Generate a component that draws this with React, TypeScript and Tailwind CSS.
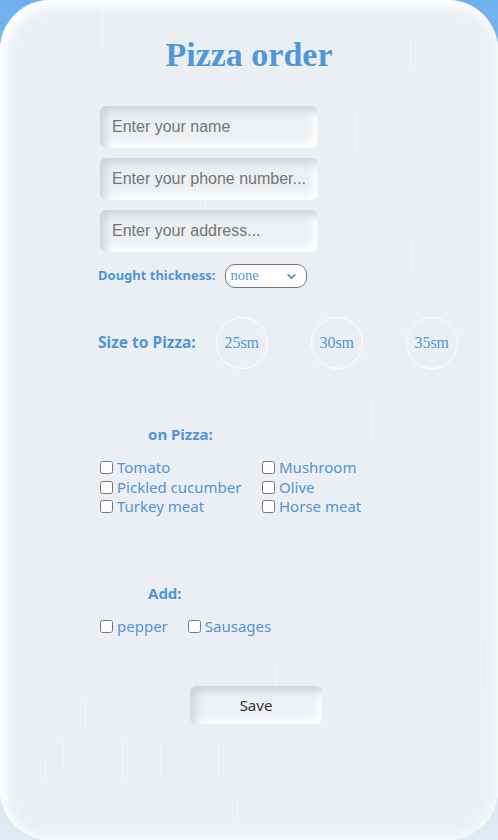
import { ChevronDown } from "lucide-react";

const rain = [
  { l: 102, t: 8, h: 40 },
  { l: 205, t: 200, h: 30 },
  { l: 355, t: 110, h: 40 },
  { l: 410, t: 40, h: 30 },
  { l: 372, t: 400, h: 40 },
  { l: 480, t: 640, h: 50 },
  { l: 45, t: 760, h: 20 },
  { l: 63, t: 740, h: 30 },
  { l: 122, t: 740, h: 40 },
  { l: 160, t: 745, h: 30 },
  { l: 218, t: 743, h: 35 },
  { l: 237, t: 800, h: 20 },
  { l: 85, t: 700, h: 30 },
  { l: 275, t: 665, h: 35 },
  { l: 412, t: 240, h: 30 },
];

const toppings = [
  "Tomato",
  "Mushroom",
  "Pickled cucumber",
  "Olive",
  "Turkey meat",
  "Horse meat",
];

const Check = ({ label }: { label: string }) => (
  <label className="flex items-center gap-[4px] text-[15px] leading-[19.5px] text-[#4f95d8]">
    <input type="checkbox" className="m-0 w-[13px] h-[13px]" />
    <span>{label}</span>
  </label>
);

const neu =
  "shadow-[inset_5px_5px_9px_#cfd3d8,inset_-5px_-5px_9px_#ffffff] bg-[#edf0f3]";

export default function App() {
  return (
    <div className="w-[498px] h-[840px] bg-gradient-to-b from-[#6eb0ee] to-[#e1e9f4] font-['Noto_Sans',sans-serif]">
      <div className="relative w-full h-full overflow-hidden rounded-[50px] bg-[#ebeff3] shadow-[inset_6px_6px_14px_#ffffff,inset_-4px_-4px_12px_#f6f8fa] pt-[35px]">
        {rain.map((r, i) => (
          <div
            key={i}
            className="absolute w-px bg-white/40"
            style={{ left: r.l, top: r.t, height: r.h }}
          />
        ))}

        <h1 className="relative text-center text-[34px] leading-[40px] font-bold text-[#4f97d8] font-['Liberation_Serif',serif]">
          Pizza order
        </h1>

        <div className="relative mt-[31px] pl-[100px] flex flex-col gap-[10px]">
          {[
            "Enter your name",
            "Enter your phone number...",
            "Enter your address...",
          ].map((p) => (
            <input
              key={p}
              placeholder={p}
              className={`w-[218px] h-[42px] rounded-[6px] px-[12px] text-[16px] font-['Liberation_Sans',sans-serif] placeholder:text-[#757575] outline-none ${neu}`}
            />
          ))}
        </div>

        <div className="relative mt-[12px] pl-[98px] flex items-center gap-[10px]">
          <span className="text-[13px] font-bold text-[#4f95d8]">
            Dought thickness:
          </span>
          <div className="relative w-[82px] h-[24px] rounded-[10px] border border-[#767676] bg-white flex items-center pl-[4px]">
            <span className="text-[14.5px] text-[#4f95d8] font-['Liberation_Serif',serif]">
              none
            </span>
            <ChevronDown
              className="absolute right-[8px] top-[5px] w-[13px] h-[13px] text-[#4f95d8]"
              strokeWidth={3.5}
            />
          </div>
        </div>

        <div className="relative mt-[29px] pl-[98px] flex items-center">
          <span className="text-[15.5px] font-bold text-[#4f95d8] mr-[20px]">
            Size to Pizza:
          </span>
          <div className="flex gap-[43px]">
            {["25sm", "30sm", "35sm"].map((s) => (
              <div
                key={s}
                className="w-[52px] h-[52px] rounded-full border border-white flex items-center justify-center text-[16px] text-[#4f95d8] font-['Liberation_Serif',serif]"
              >
                {s}
              </div>
            ))}
          </div>
        </div>

        <div className="relative mt-[55px] pl-[148px] text-[15px] leading-[20px] font-bold text-[#4f95d8]">
          on Pizza:
        </div>

        <div className="relative mt-[14px] pl-[100px] grid grid-cols-[162px_auto]">
          {toppings.map((t) => (
            <Check key={t} label={t} />
          ))}
        </div>

        <div className="relative mt-[66px] pl-[148px] text-[15px] leading-[20px] font-bold text-[#4f95d8]">
          Add:
        </div>

        <div className="relative mt-[14px] pl-[100px] flex gap-[20px]">
          <Check label="pepper" />
          <Check label="Sausages" />
        </div>

        <div className="relative mt-[50px] pl-[190px]">
          <button
            className={`w-[132px] h-[38px] rounded-[6px] text-[15px] text-[#333] ${neu}`}
          >
            Save
          </button>
        </div>
      </div>
    </div>
  );
}
